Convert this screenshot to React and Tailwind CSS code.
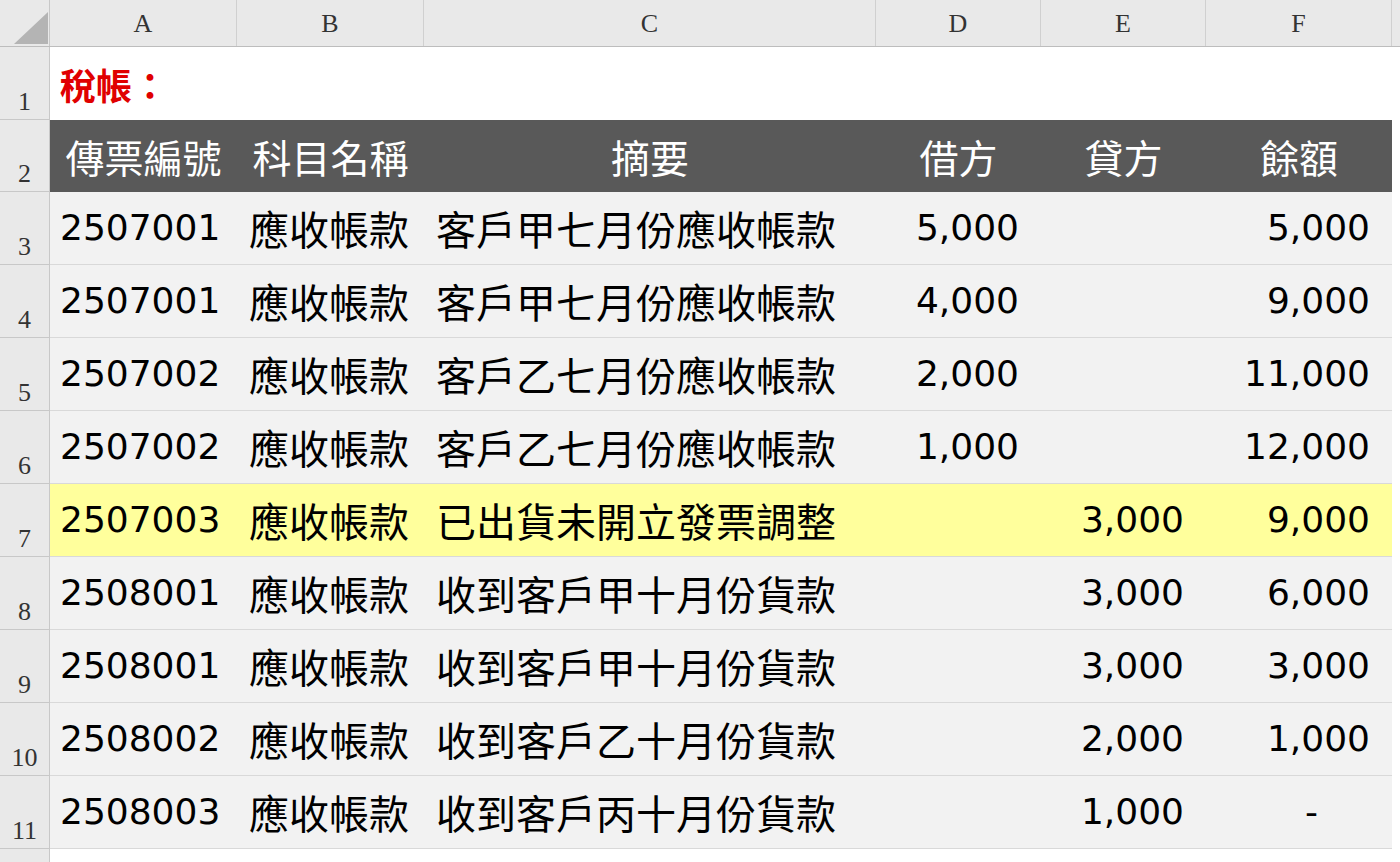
const cols = [
  { l: "A", w: 187 },
  { l: "B", w: 187 },
  { l: "C", w: 452 },
  { l: "D", w: 165 },
  { l: "E", w: 165 },
  { l: "F", w: 186 },
];
const data = [
  ["2507001", "應收帳款", "客戶甲七月份應收帳款", "5,000", "", "5,000"],
  ["2507001", "應收帳款", "客戶甲七月份應收帳款", "4,000", "", "9,000"],
  ["2507002", "應收帳款", "客戶乙七月份應收帳款", "2,000", "", "11,000"],
  ["2507002", "應收帳款", "客戶乙七月份應收帳款", "1,000", "", "12,000"],
  ["2507003", "應收帳款", "已出貨未開立發票調整", "", "3,000", "9,000"],
  ["2508001", "應收帳款", "收到客戶甲十月份貨款", "", "3,000", "6,000"],
  ["2508001", "應收帳款", "收到客戶甲十月份貨款", "", "3,000", "3,000"],
  ["2508002", "應收帳款", "收到客戶乙十月份貨款", "", "2,000", "1,000"],
  ["2508003", "應收帳款", "收到客戶丙十月份貨款", "", "1,000", "-"],
];
const font = { fontFamily: '"Noto Sans CJK TC", "Noto Sans", sans-serif' };
const num = { fontFamily: '"DejaVu Sans", "Noto Sans CJK TC", sans-serif' };
const serif = { fontFamily: '"Liberation Serif", serif' };

function RowHead({ n, h }) {
  return (
    <div className={`w-[50px] ${h} bg-[#e9e9e9] border-b border-r border-[#c8c8c8] flex items-end justify-center text-[26px] text-[#333] leading-none pb-1`} style={serif}>
      {n}
    </div>
  );
}

export default function App() {
  return (
    <div className="w-[1400px] h-[862px] bg-white overflow-hidden" style={font}>
      <div className="flex h-[47px] bg-[#e9e9e9] border-b border-[#bdbdbd]">
        <div className="w-[50px] h-full border-r border-[#c8c8c8] relative">
          <svg className="absolute left-[14px] top-[12px]" width="34" height="32"><polygon points="34,0 34,32 0,32" fill="#b4b4b4" /></svg>
        </div>
        {cols.map((c) => (
          <div key={c.l} style={{ ...serif, width: c.w }} className="h-full border-r border-[#d0d0d0] flex items-center justify-center text-[26px] text-[#333]">
            {c.l}
          </div>
        ))}
        <div className="flex-1" />
      </div>
      <div className="flex">
        <RowHead n={1} h="h-[73px]" />
        <div className="h-[73px] flex items-center pl-[10px] text-[36px] font-bold text-[#e00000]">稅帳：</div>
      </div>
      <div className="flex">
        <RowHead n={2} h="h-[72px]" />
        <div className="flex h-[72px] bg-[#595959] text-white text-[39px]">
          {["傳票編號", "科目名稱", "摘要", "借方", "貸方", "餘額"].map((t, i) => (
            <div key={i} style={{ width: cols[i].w }} className="flex items-center justify-center">{t}</div>
          ))}
        </div>
      </div>
      {data.map((r, ri) => (
        <div key={ri} className="flex">
          <RowHead n={ri + 3} h="h-[73px]" />
          <div className={`flex h-[73px] border-b border-[#d9d9d9] text-[40px] text-black ${ri === 4 ? "bg-[#ffff9c]" : "bg-[#f2f2f2]"}`}>
            {r.map((t, i) => (
              <div
                key={i}
                style={i === 0 || i > 2 ? { ...num, width: cols[i].w } : { width: cols[i].w }}
                className={`flex items-center ${i === 0 || i > 2 ? "text-[36px]" : ""} ${i === 0 ? "pl-[10px]" : i < 3 ? "pl-[12px]" : "justify-end pr-[22px]"} ${i === 5 && t === "-" ? "pr-[74px]" : ""}`}
              >
                {t}
              </div>
            ))}
          </div>
        </div>
      ))}
      <div className="flex">
        <div className="w-[50px] h-[20px] bg-[#e9e9e9] border-r border-[#c8c8c8]" />
      </div>
    </div>
  );
}
